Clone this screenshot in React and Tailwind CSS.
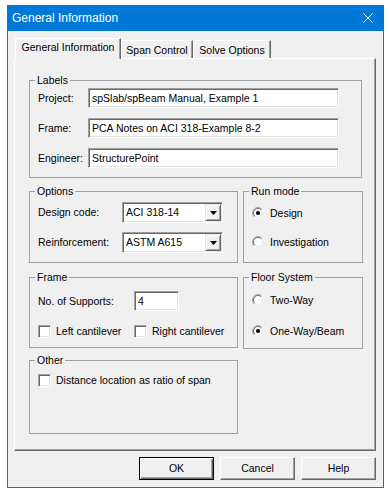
import React from 'react';

const sunken =
  'border border-t-[#a0a0a0] border-l-[#a0a0a0] border-r-white border-b-white shadow-[inset_1px_1px_0_#696969,inset_-1px_-1px_0_#e3e3e3]';

const Group = ({ title, className, children }) => (
  <fieldset className={`border border-[#a0a0a0] pl-[8px] ${className}`}>
    <legend className="-ml-[3px] px-[2px] leading-[13px]">{title}</legend>
    {children}
  </fieldset>
);

const TextBox = ({ value, width }) => (
  <div className={`flex h-[20px] items-center bg-white pl-[3px] ${sunken} ${width}`}>{value}</div>
);

const Combo = ({ value }) => (
  <div className={`flex h-[21px] w-[101px] bg-white p-px ${sunken}`}>
    <div className="flex flex-1 items-center pl-[2px]">{value}</div>
    <div className="flex w-[16px] items-center justify-center border border-t-[#e3e3e3] border-l-[#e3e3e3] border-r-[#696969] border-b-[#696969] bg-[#f0f0f0] shadow-[inset_1px_1px_0_#fff,inset_-1px_-1px_0_#a0a0a0]">
      <svg width="7" height="4" viewBox="0 0 7 4">
        <path d="M0 0h7L3.5 4z" fill="#000" />
      </svg>
    </div>
  </div>
);

const Radio = ({ label, checked }) => (
  <div className="flex h-[20px] items-center gap-[6px]">
    <svg width="12" height="12" viewBox="0 0 12 12">
      <circle cx="6" cy="6" r="5.5" fill="#fff" />
      <path d="M9.9 2.1A5.5 5.5 0 0 0 2.1 9.9" stroke="#a0a0a0" fill="none" />
      <path d="M9.2 2.8A4.5 4.5 0 0 0 2.8 9.2" stroke="#696969" fill="none" />
      <path d="M2.8 9.2A4.5 4.5 0 0 0 9.2 2.8" stroke="#e3e3e3" fill="none" />
      {checked && <circle cx="6" cy="6" r="2" fill="#000" />}
    </svg>
    <span>{label}</span>
  </div>
);

const Check = ({ label }) => (
  <div className="flex h-[13px] items-center gap-[5px]">
    <span className={`h-[13px] w-[13px] bg-white ${sunken}`} />
    <span>{label}</span>
  </div>
);

const Tab = ({ label, active }) =>
  active ? (
    <div className="relative z-10 -mb-px flex h-[21px] w-[106px] justify-center border-l border-t border-r border-l-white border-t-white border-r-[#696969] bg-[#f0f0f0] pt-[2px] shadow-[inset_-1px_0_0_#a0a0a0]">
      {label}
    </div>
  ) : (
    <div className="flex h-[18px] justify-center border-l border-t border-r border-l-white border-t-white border-r-[#696969] pt-[3px] shadow-[inset_-1px_0_0_#a0a0a0]">
      {label}
    </div>
  );

const Button = ({ label, primary }) => (
  <button
    className={`flex h-[23px] w-[75px] items-center justify-center bg-[#f0f0f0] ${
      primary
        ? 'border border-black shadow-[inset_1px_1px_0_#fff,inset_-1px_-1px_0_#696969,inset_-2px_-2px_0_#a0a0a0]'
        : 'border border-t-white border-l-white border-r-[#696969] border-b-[#696969] shadow-[inset_-1px_-1px_0_#a0a0a0]'
    }`}
  >
    {label}
  </button>
);

export default function App() {
  return (
    <div className="h-[494px] w-[390px] bg-white pl-[7px] pt-[5px] font-['Liberation_Sans',Arial,sans-serif] text-[10.5px] leading-[13px] text-black">
      <div className="flex h-[483px] w-[377px] flex-col border-x border-b border-[#0078d7] bg-[#f0f0f0]">
        <div className="flex h-[26px] items-center justify-between bg-[#0078d7] pl-[4px] pr-[10px] text-[12px] text-white">
          <span>General Information</span>
          <svg width="10" height="10" viewBox="0 0 10 10">
            <path d="M0.5 0.5L9.5 9.5M9.5 0.5L0.5 9.5" stroke="#fff" strokeWidth="1" />
          </svg>
        </div>

        <div className="pl-[6px] pt-[7px]">
          <div className="flex h-[20px] items-end pl-[1px]">
            <Tab label="General Information" active />
            <div className="w-[72px]">
              <Tab label="Span Control" />
            </div>
            <div className="w-[78px]">
              <Tab label="Solve Options" />
            </div>
          </div>

          <div className="h-[393px] w-[362px] border border-l-white border-t-white border-r-[#696969] border-b-[#696969] pl-[14px] pt-[15px] shadow-[inset_-1px_-1px_0_#a0a0a0]">
            <Group title="Labels" className="h-[104px] w-[333px]">
              <div className="flex flex-col gap-[10px] pt-px">
                {[
                  ['Project:', 'spSlab/spBeam Manual, Example 1'],
                  ['Frame:', 'PCA Notes on ACI 318-Example 8-2'],
                  ['Engineer:', 'StructurePoint'],
                ].map(([k, v]) => (
                  <div key={k} className="flex items-center">
                    <span className="w-[50px]">{k}</span>
                    <TextBox value={v} width="w-[251px]" />
                  </div>
                ))}
              </div>
            </Group>

            <div className="mt-[7px] flex gap-[5px]">
              <Group title="Options" className="h-[78px] w-[209px]">
                <div className="flex flex-col gap-[9px] pt-[4px]">
                  <div className="flex items-center">
                    <span className="w-[84px]">Design code:</span>
                    <Combo value="ACI 318-14" />
                  </div>
                  <div className="flex items-center">
                    <span className="w-[84px]">Reinforcement:</span>
                    <Combo value="ASTM A615" />
                  </div>
                </div>
              </Group>
              <Group title="Run mode" className="h-[78px] w-[120px]">
                <div className="flex flex-col gap-[9px] pt-[5px]">
                  <Radio label="Design" checked />
                  <Radio label="Investigation" />
                </div>
              </Group>
            </div>

            <div className="mt-[8px] flex gap-[5px]">
              <Group title="Frame" className="h-[77px] w-[209px]">
                <div className="grid grid-cols-[96px_1fr] items-center gap-y-[14px] pt-[7px]">
                  <span>No. of Supports:</span>
                  <TextBox value="4" width="w-[45px]" />
                  <Check label="Left cantilever" />
                  <Check label="Right cantilever" />
                </div>
              </Group>
              <Group title="Floor System" className="h-[78px] w-[120px]">
                <div className="flex flex-col gap-[11px] pt-[6px]">
                  <Radio label="Two-Way" />
                  <Radio label="One-Way/Beam" checked />
                </div>
              </Group>
            </div>

            <Group title="Other" className="mt-[5px] h-[80px] w-[209px]">
              <div className="pt-[7px]">
                <Check label="Distance location as ratio of span" />
              </div>
            </Group>
          </div>

          <div className="mt-[6px] flex w-[362px] justify-end gap-[6px]">
            <Button label="OK" primary />
            <Button label="Cancel" />
            <Button label="Help" />
          </div>
        </div>
      </div>
    </div>
  );
}
